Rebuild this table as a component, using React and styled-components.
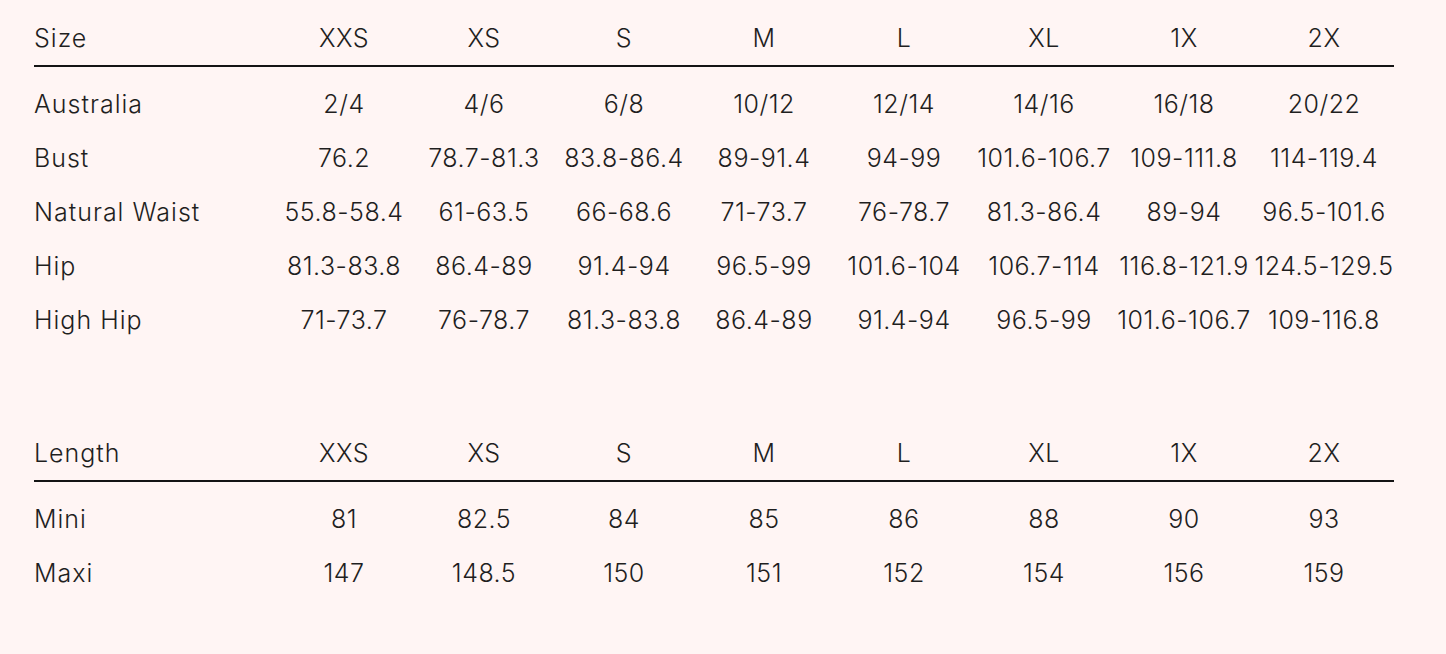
import React from "react";
import styled, { createGlobalStyle } from "styled-components";

const Global = createGlobalStyle`
  html, body { margin: 0; padding: 0; background: #fff5f4; }
  body { font-family: Inter, "Liberation Sans", sans-serif; color: #1f1f1f; }
`;

const Page = styled.div`
  padding: 11px 0 54px 34px;
  display: flex;
  flex-direction: column;
  gap: 79px;
`;

const Table = styled.div`
  width: 1360px;
  display: flex;
  flex-direction: column;
`;

const Row = styled.div`
  display: grid;
  grid-template-columns: 240px repeat(8, 140px);
  height: 54px;
  align-items: center;
`;

const HeadRow = styled(Row)`
  border-bottom: 2px solid #141414;
  margin-bottom: 10px;
`;

const Cell = styled.div`
  font-size: 25px;
  font-weight: 350;
  line-height: 54px;
  text-align: ${(p) => (p.$label ? "left" : "center")};
  white-space: nowrap;
  letter-spacing: ${(p) => (p.$label ? "1px" : "0.5px")};
`;

const sizes = ["XXS", "XS", "S", "M", "L", "XL", "1X", "2X"];

const sizeRows = [
  ["Australia", "2/4", "4/6", "6/8", "10/12", "12/14", "14/16", "16/18", "20/22"],
  ["Bust", "76.2", "78.7-81.3", "83.8-86.4", "89-91.4", "94-99", "101.6-106.7", "109-111.8", "114-119.4"],
  ["Natural Waist", "55.8-58.4", "61-63.5", "66-68.6", "71-73.7", "76-78.7", "81.3-86.4", "89-94", "96.5-101.6"],
  ["Hip", "81.3-83.8", "86.4-89", "91.4-94", "96.5-99", "101.6-104", "106.7-114", "116.8-121.9", "124.5-129.5"],
  ["High Hip", "71-73.7", "76-78.7", "81.3-83.8", "86.4-89", "91.4-94", "96.5-99", "101.6-106.7", "109-116.8"],
];

const lengthRows = [
  ["Mini", "81", "82.5", "84", "85", "86", "88", "90", "93"],
  ["Maxi", "147", "148.5", "150", "151", "152", "154", "156", "159"],
];

function SizeTable({ title, rows }) {
  return (
    <Table>
      <HeadRow>
        <Cell $label>{title}</Cell>
        {sizes.map((s) => (
          <Cell key={s}>{s}</Cell>
        ))}
      </HeadRow>
      {rows.map((r) => (
        <Row key={r[0]}>
          {r.map((c, i) => (
            <Cell key={i} $label={i === 0}>
              {c}
            </Cell>
          ))}
        </Row>
      ))}
    </Table>
  );
}

export default function App() {
  return (
    <>
      <Global />
      <Page>
        <SizeTable title="Size" rows={sizeRows} />
        <SizeTable title="Length" rows={lengthRows} />
      </Page>
    </>
  );
}
